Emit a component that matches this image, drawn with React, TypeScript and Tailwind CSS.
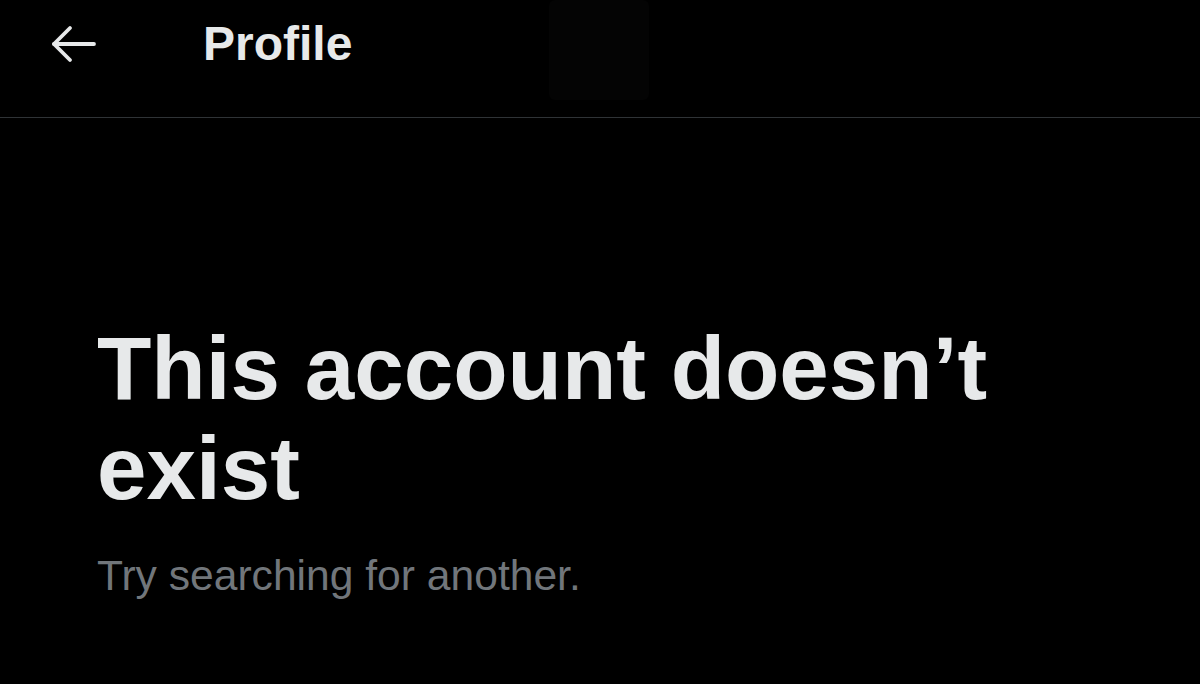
export default function App() {
  return (
    <div className="min-h-screen w-full bg-black font-['Liberation_Sans',Arial,sans-serif] text-[#e7e9ea]">
      <header className="relative flex h-[118px] items-start border-b border-[#2f3336]">
        <div className="absolute left-[549px] top-0 h-[100px] w-[100px] rounded-md bg-[#040404]" aria-hidden="true" />
        <button aria-label="Back" className="ml-[51px] mt-[24px] flex h-[40px] w-[46px] items-center justify-center">
          <svg viewBox="0 0 46 40" className="h-[40px] w-[46px]" fill="none" stroke="currentColor" strokeWidth="3.8" strokeLinecap="round" strokeLinejoin="round">
            <path d="M3 20h40" />
            <path d="M19 4L3 20l16 16" />
          </svg>
        </button>
        <h1 className="ml-[106px] mt-[20px] text-[48px] font-bold leading-none">Profile</h1>
      </header>

      <main className="px-[97px] pt-[200px]">
        <h2 className="text-[89px] font-bold leading-[100px]">
          This account doesn’t exist
        </h2>
        <p className="mt-[32px] text-[42.6px] leading-[50px] text-[#71767b]">Try searching for another.</p>
      </main>
    </div>
  );
}
